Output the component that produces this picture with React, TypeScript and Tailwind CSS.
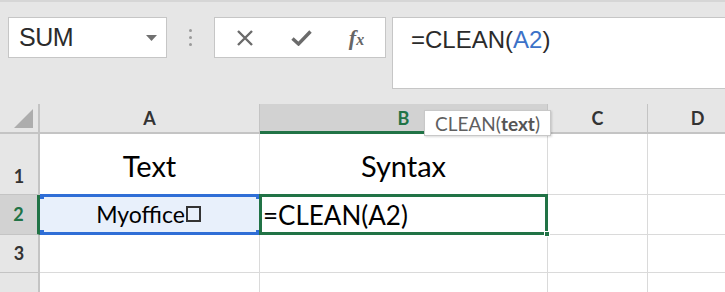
import React from "react";

const cellFont = { fontFamily: "Lato, 'Noto Sans', sans-serif" };

export default function App() {
  return (
    <div className="w-[725px] h-[292px] overflow-hidden bg-white relative" style={{ fontFamily: "'Liberation Sans', Arial, sans-serif" }}>
      {/* Formula bar */}
      <div className="h-[104px] bg-[#e6e6e6] border-t-2 border-[#d6d6d6] flex items-start pt-[15px] pl-[8px]">
        <div className="w-[159px] h-[41px] bg-white border border-[#c6c6c6] flex items-center pl-[10px] pr-[9px] justify-between">
          <span className="text-[25px] text-[#2b2b2b] leading-none tracking-[-0.5px]">SUM</span>
          <svg width="11" height="6" viewBox="0 0 11 6"><path d="M0 0H11L5.5 6Z" fill="#707070" /></svg>
        </div>
        <div className="w-[47px] h-[41px] flex flex-col items-center justify-center gap-[4px]">
          <span className="w-[3px] h-[3px] rounded-full bg-[#9a9a9a]" />
          <span className="w-[3px] h-[3px] rounded-full bg-[#9a9a9a]" />
          <span className="w-[3px] h-[3px] rounded-full bg-[#9a9a9a]" />
        </div>
        <div className="w-[172px] h-[41px] bg-white border border-[#c6c6c6] flex items-center">
          <div className="w-[59px] flex justify-center">
            <svg width="18" height="18" viewBox="0 0 18 18"><path d="M2 2L16 16M16 2L2 16" stroke="#6b6b6b" strokeWidth="2.4" /></svg>
          </div>
          <div className="w-[54px] flex justify-center">
            <svg width="21" height="16" viewBox="0 0 21 16"><path d="M1.5 8.5L7.5 14L19.5 1.5" stroke="#6b6b6b" strokeWidth="3.4" fill="none" /></svg>
          </div>
          <div className="w-[57px] flex justify-center">
            <span className="italic font-bold text-[#666] text-[22px] leading-none" style={{ fontFamily: "'Liberation Serif', serif" }}>
              f<span className="text-[16px]">x</span>
            </span>
          </div>
        </div>
        <div className="ml-[6px] flex-1 h-[72px] bg-white border border-[#c6c6c6] border-r-0 pl-[18px] pt-[10px]">
          <span className="text-[24px] text-[#2b2b2b] leading-none">
            =CLEAN(<span className="text-[#3c72c8]">A2</span>)
          </span>
        </div>
      </div>

      {/* Grid */}
      <div className="grid grid-cols-[40px_220px_288px_100px_100px] grid-rows-[30px_61px_40px_38px_40px] relative" style={cellFont}>
        {/* header row */}
        <div className="bg-[#e6e6e6] border-r-2 border-b-2 border-[#c4c4c4] flex items-end justify-end pr-[5px] pb-[4px]">
          <svg width="19" height="19" viewBox="0 0 19 19"><path d="M19 0V19H0Z" fill="#adadad" /></svg>
        </div>
        <div className="bg-[#e6e6e6] border-r border-b-2 border-[#c4c4c4] flex items-center justify-center text-[18px] font-bold text-[#333]">A</div>
        <div className="bg-[#d2d2d2] border-r border-[#c4c4c4] border-b-[3px] border-b-[#217346] flex items-center justify-center text-[18px] font-bold text-[#217346] pt-[2px]">B</div>
        <div className="bg-[#e6e6e6] border-r border-b-2 border-[#c4c4c4] flex items-center justify-center text-[18px] font-bold text-[#333]">C</div>
        <div className="bg-[#e6e6e6] border-r border-b-2 border-[#c4c4c4] flex items-center justify-center text-[18px] font-bold text-[#333]">D</div>

        {/* row 1 */}
        <div className="bg-[#e6e6e6] border-r-2 border-b border-[#c4c4c4] flex items-end justify-center pb-[4px] text-[18px] font-bold text-[#333]">1</div>
        <div className="border-r border-b border-[#dadada] flex items-end justify-center pb-[14px] text-[29px] text-black leading-none">Text</div>
        <div className="border-r border-b border-[#dadada] flex items-end justify-center pb-[14px] text-[29px] text-black leading-none">Syntax</div>
        <div className="border-r border-b border-[#dadada]" />
        <div className="border-r border-b border-[#dadada]" />

        {/* row 2 */}
        <div className="bg-[#d2d2d2] border-r-[3px] border-r-[#217346] border-b border-[#c4c4c4] flex items-center justify-center text-[18px] font-bold text-[#217346]">2</div>
        <div className="relative bg-[#e8f0fb] border-r border-b border-[#dadada] flex items-center justify-center text-[23px] text-black leading-none pr-[2px]">
          <span>Myoffice</span>
          <span className="shrink-0 block w-[15px] h-[16px] border-2 border-[#333] ml-[1px] mb-[1px]" />
          <div className="absolute left-[1px] right-[-1px] top-[-1px] bottom-[-1px] border-y-[3px] border-[#2f6ed6] pointer-events-none" />
          <span className="absolute left-0 top-[-1px] w-[4px] h-[5px] bg-[#2f6ed6]" />
          <span className="absolute left-0 bottom-[-1px] w-[4px] h-[5px] bg-[#2f6ed6]" />
          <span className="absolute right-[-2px] top-[-1px] w-[5px] h-[5px] bg-[#2f6ed6]" />
          <span className="absolute right-[-2px] bottom-[-1px] w-[5px] h-[5px] bg-[#2f6ed6]" />
        </div>
        <div className="relative border-r border-b border-[#dadada] flex items-center pl-[3px] text-[26px] text-black leading-none">
          =CLEAN(A2)
          <div className="absolute left-[-1px] right-[-1px] top-[-1px] bottom-[-1px] border-[3px] border-[#217346] pointer-events-none" />
          <span className="absolute right-[-3px] bottom-[-3px] w-[6px] h-[6px] bg-[#217346] border border-white" />
        </div>
        <div className="border-r border-b border-[#dadada]" />
        <div className="border-r border-b border-[#dadada]" />

        {/* row 3 */}
        <div className="bg-[#e6e6e6] border-r-2 border-b border-[#c4c4c4] flex items-center justify-center text-[18px] font-bold text-[#333]">3</div>
        <div className="border-r border-b border-[#dadada]" />
        <div className="border-r border-b border-[#dadada]" />
        <div className="border-r border-b border-[#dadada]" />
        <div className="border-r border-b border-[#dadada]" />

        {/* row 4 */}
        <div className="bg-[#e6e6e6] border-r-2 border-b border-[#c4c4c4]" />
        <div className="border-r border-b border-[#dadada]" />
        <div className="border-r border-b border-[#dadada]" />
        <div className="border-r border-b border-[#dadada]" />
        <div className="border-r border-b border-[#dadada]" />

        {/* tooltip */}
        <div className="absolute left-[424px] top-[6px] w-[127px] h-[26px] bg-white border border-[#c8c8c8] shadow-[1px_1px_2px_rgba(0,0,0,0.15)] flex items-center justify-center text-[19px] text-[#5f5f5f] leading-none">
          CLEAN(<span className="font-bold text-[#555]">text</span>)
        </div>
      </div>
    </div>
  );
}
